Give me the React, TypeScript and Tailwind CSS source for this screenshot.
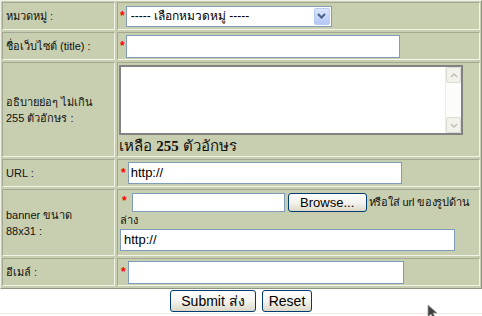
import React from 'react';

const cellL =
  'border border-t-[#a3a893] border-l-[#a3a893] border-r-[#f1f4e6] border-b-[#f1f4e6] bg-[#c8cfb0]';
const input = 'border border-[#7f9db9] bg-white';
const xpButton =
  'rounded-[3px] border border-[#003c74] bg-gradient-to-b from-white via-[#f4f3ee] to-[#dcd9c8] text-[13px] text-black leading-none flex items-center justify-center';

function Star({ className = '' }: { className?: string }) {
  return <span className={`text-[#ff0000] text-[12px] leading-none font-bold ${className}`}>*</span>;
}

function Label({ children }: { children: React.ReactNode }) {
  return (
    <div className={`${cellL} w-[113px] shrink-0 flex items-center pl-[3px] text-[11px] leading-[16px] text-[#111]`}>
      <div>{children}</div>
    </div>
  );
}

function Row({ h, label, children }: { h: string; label: React.ReactNode; children: React.ReactNode }) {
  return (
    <div className={`flex gap-[2px] ${h}`}>
      <Label>{label}</Label>
      <div className={`${cellL} flex-1 min-w-0 relative overflow-hidden`}>{children}</div>
    </div>
  );
}

export default function App() {
  return (
    <div className="relative w-[482px] h-[316px] bg-white font-['Liberation_Sans','DejaVu_Sans',sans-serif] overflow-hidden">
      <div className="w-[482px] h-[289px] bg-[#c8cfb0] border border-t-[#eef1e3] border-l-[#eef1e3] border-r-[#8f9484] border-b-[#8f9484] p-px flex flex-col gap-[2px]">
        <Row h="h-[28px]" label="หมวดหมู่ :">
          <div className="flex items-center h-full pl-[2px] gap-[1px]">
            <Star />
            <div className={`${input} w-[206px] h-[21px] flex items-center justify-between`}>
              <span className="pl-[4px] text-[12px] text-black whitespace-nowrap">----- เลือกหมวดหมู่ -----</span>
              <span className="w-[16px] h-[17px] mr-px rounded-[2px] bg-gradient-to-b from-[#dbe6fd] to-[#b3c8f5] border border-[#b8cbf3] flex items-center justify-center">
                <svg width="9" height="6" viewBox="0 0 9 6">
                  <path d="M1 1 L4.5 4.5 L8 1" stroke="#4d6185" strokeWidth="2" fill="none" />
                </svg>
              </span>
            </div>
          </div>
        </Row>

        <Row h="h-[28px]" label="ชื่อเว็บไซต์ (title) :">
          <div className="flex items-center h-full pl-[2px] gap-[1px]">
            <Star />
            <div className={`${input} w-[274px] h-[23px]`} />
          </div>
        </Row>

        <Row h="h-[95px]" label={<>อธิบายย่อๆ ไม่เกิน<br />255 ตัวอักษร :</>}>
          <div className="pt-[2px] pl-[1px]">
            <div className="w-[344px] h-[70px] border-2 border-[#828282] bg-white flex justify-end">
              <div className="w-[16px] h-full flex flex-col justify-between bg-[#fcfcfb] border-l border-[#eeede5]">
                <div className="h-[16px] bg-[#f2f1eb] border border-[#dcdbd2] rounded-[2px] flex items-center justify-center">
                  <svg width="8" height="5" viewBox="0 0 8 5">
                    <path d="M1 4 L4 1 L7 4" stroke="#c2c1b8" strokeWidth="1.5" fill="none" />
                  </svg>
                </div>
                <div className="h-[16px] bg-[#f2f1eb] border border-[#dcdbd2] rounded-[2px] flex items-center justify-center">
                  <svg width="8" height="5" viewBox="0 0 8 5">
                    <path d="M1 1 L4 4 L7 1" stroke="#c2c1b8" strokeWidth="1.5" fill="none" />
                  </svg>
                </div>
              </div>
            </div>
            <div className="text-[15px] leading-[20px] text-[#111] mt-px">
              เหลือ <b className="font-['Liberation_Serif',serif]">255</b> ตัวอักษร
            </div>
          </div>
        </Row>

        <Row h="h-[28px]" label="URL :">
          <div className="flex items-center h-full pl-[3px] gap-[2px]">
            <Star />
            <div className={`${input} w-[274px] h-[22px] flex items-center pl-[2px] text-[13px] text-black`}>
              http://
            </div>
          </div>
        </Row>

        <Row h="h-[67px]" label={<>banner ขนาด<br />88x31 :</>}>
          <div className="pl-[2px] pt-[3px]">
            <div className="flex items-start gap-[3px] whitespace-nowrap">
              <Star className="mt-[2px] ml-[2px]" />
              <div className={`${input} w-[153px] h-[19px] ml-[2px]`} />
              <div className={`${xpButton} w-[79px] h-[19px]`}>Browse...</div>
              <span className="text-[11px] leading-[18px] text-[#111] -ml-px tracking-[-0.2px]">หรือใส่ url ของรูปด้าน</span>
            </div>
            <div className="text-[11px] leading-[14px] text-[#111] mt-[1px]">ล่าง</div>
            <div className={`${input} w-[335px] h-[22px] mt-[2px] flex items-center pl-[3px] text-[13px] text-black`}>
              http://
            </div>
          </div>
        </Row>

        <Row h="h-[28px]" label="อีเมล์ :">
          <div className="flex items-center h-full pl-[3px] gap-[2px]">
            <Star />
            <div className={`${input} w-[276px] h-[23px]`} />
          </div>
        </Row>
      </div>

      <div className="flex justify-center gap-[6px] mt-[1px]">
        <div className={`${xpButton} w-[86px] h-[22px] text-[14px]`}>Submit ส่ง</div>
        <div className={`${xpButton} w-[50px] h-[22px] text-[14px]`}>Reset</div>
      </div>
      <div className="absolute left-0 right-0 top-[313px] h-px bg-[#f5e9e2]" />

      <svg className="absolute left-[427px] top-[304px]" width="12" height="14" viewBox="0 0 12 14">
        <path d="M1 1 L1 13 L4 10 L6 14 L8 13 L6 9 L10 9 Z" fill="#404040" stroke="#9a9a9a" strokeWidth="0.8" />
      </svg>
    </div>
  );
}
